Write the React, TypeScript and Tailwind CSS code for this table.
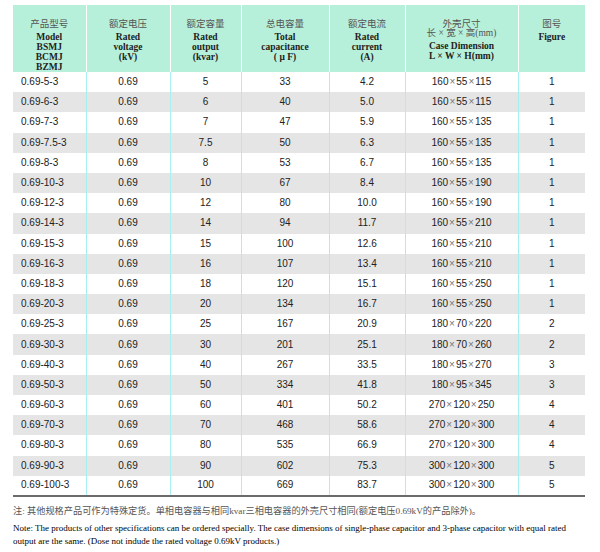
const rows = [
  ["0.69-5-3", "0.69", "5", "33", "4.2", "160×55×115", "1"],
  ["0.69-6-3", "0.69", "6", "40", "5.0", "160×55×115", "1"],
  ["0.69-7-3", "0.69", "7", "47", "5.9", "160×55×135", "1"],
  ["0.69-7.5-3", "0.69", "7.5", "50", "6.3", "160×55×135", "1"],
  ["0.69-8-3", "0.69", "8", "53", "6.7", "160×55×135", "1"],
  ["0.69-10-3", "0.69", "10", "67", "8.4", "160×55×190", "1"],
  ["0.69-12-3", "0.69", "12", "80", "10.0", "160×55×190", "1"],
  ["0.69-14-3", "0.69", "14", "94", "11.7", "160×55×210", "1"],
  ["0.69-15-3", "0.69", "15", "100", "12.6", "160×55×210", "1"],
  ["0.69-16-3", "0.69", "16", "107", "13.4", "160×55×210", "1"],
  ["0.69-18-3", "0.69", "18", "120", "15.1", "160×55×250", "1"],
  ["0.69-20-3", "0.69", "20", "134", "16.7", "160×55×250", "1"],
  ["0.69-25-3", "0.69", "25", "167", "20.9", "180×70×220", "2"],
  ["0.69-30-3", "0.69", "30", "201", "25.1", "180×70×260", "2"],
  ["0.69-40-3", "0.69", "40", "267", "33.5", "180×95×270", "3"],
  ["0.69-50-3", "0.69", "50", "334", "41.8", "180×95×345", "3"],
  ["0.69-60-3", "0.69", "60", "401", "50.2", "270×120×250", "4"],
  ["0.69-70-3", "0.69", "70", "468", "58.6", "270×120×300", "4"],
  ["0.69-80-3", "0.69", "80", "535", "66.9", "270×120×300", "4"],
  ["0.69-90-3", "0.69", "90", "602", "75.3", "300×120×300", "5"],
  ["0.69-100-3", "0.69", "100", "669", "83.7", "300×120×300", "5"],
];

const headers = [
  { w: "w-[73px]", cn: ["产品型号"], en: ["Model", "BSMJ", "BCMJ", "BZMJ"] },
  { w: "w-[84px]", cn: ["额定电压"], en: ["Rated", "voltage", "(kV)"] },
  { w: "w-[71px]", cn: ["额定容量"], en: ["Rated", "output", "(kvar)"] },
  { w: "w-[88px]", cn: ["总电容量"], en: ["Total", "capacitance", "( μ F)"] },
  { w: "w-[76px]", cn: ["额定电流"], en: ["Rated", "current", "(A)"] },
  { w: "w-[113px]", cn: ["外壳尺寸", "长 × 宽 × 高(mm)"], en: ["Case Dimension", "L × W × H(mm)"] },
  { w: "w-[67px]", cn: ["图号"], en: ["Figure"] },
];

// dimension cells: the × sign is lighter and a bit wider than the digits
function Dim({ v }: { v: string }) {
  const parts = v.split("×");
  return (
    <>
      {parts.map((p, i) => (
        <span key={i}>
          {i > 0 && <span className="px-[1px] text-[#777]">×</span>}
          {p}
        </span>
      ))}
    </>
  );
}

export default function App() {
  return (
    <div className="w-[600px] h-[552px] bg-white pt-[5px] pl-[13px]">
      <table className="w-[572px] table-fixed border-collapse">
        <thead>
          <tr className="h-[67px] bg-[#b7f0da]">
            {headers.map((h, i) => (
              <th
                key={h.cn[0]}
                className={`${h.w} align-top pt-[14px] text-center font-bold text-[9.5px] leading-[10px] text-[#222] font-['Liberation_Serif','Noto_Sans_CJK_SC',serif] ${i < 6 ? "border-r border-white" : ""}`}
              >
                {h.cn.map((c, ci) => (
                  <div
                    key={c}
                    className={`font-normal text-[#555] ${ci === h.cn.length - 1 ? "mb-[3px]" : ""} ${ci > 0 ? "-mt-[1px]" : ""}`}
                  >
                    {c}
                  </div>
                ))}
                {h.en.map((l) => (
                  <div key={l}>{l}</div>
                ))}
              </th>
            ))}
          </tr>
        </thead>
        <tbody className="border-b-2 border-[#6a6a6a]">
          {rows.map((r, ri) => (
            <tr
              key={r[0]}
              className={`h-[20.2px] ${ri % 2 === 1 ? "bg-[#e5e5e5]" : "bg-white"}`}
            >
              {r.map((c, ci) => (
                <td
                  key={ci}
                  className={`p-0 text-[10px] leading-none text-[#222] font-['Liberation_Sans',Arial,sans-serif] ${ci === 0 ? "text-left pl-[8px]" : "text-center"} ${ci < 6 ? "border-r border-[#a6f0f0]" : ""}`}
                >
                  {ci === 5 ? <Dim v={c} /> : c}
                </td>
              ))}
            </tr>
          ))}
        </tbody>
      </table>
      <div className="mt-[7px] w-[575px] text-[#222] font-['Liberation_Serif','Noto_Sans_CJK_SC',serif]">
        <p className="text-[9.2px] leading-[14px] text-[#555]">
          注: 其他规格产品可作为特殊定货。单相电容器与相同kvar三相电容器的外壳尺寸相同(额定电压0.69kV的产品除外)。
        </p>
        <p className="mt-[4px] text-[9px] leading-[13px] text-black">
          Note: The products of other specifications can be ordered specially. The case dimensions of single-phase capacitor and 3-phase capacitor with equal rated output are the same. (Dose not indude the rated voltage 0.69kV products.)
        </p>
      </div>
    </div>
  );
}
